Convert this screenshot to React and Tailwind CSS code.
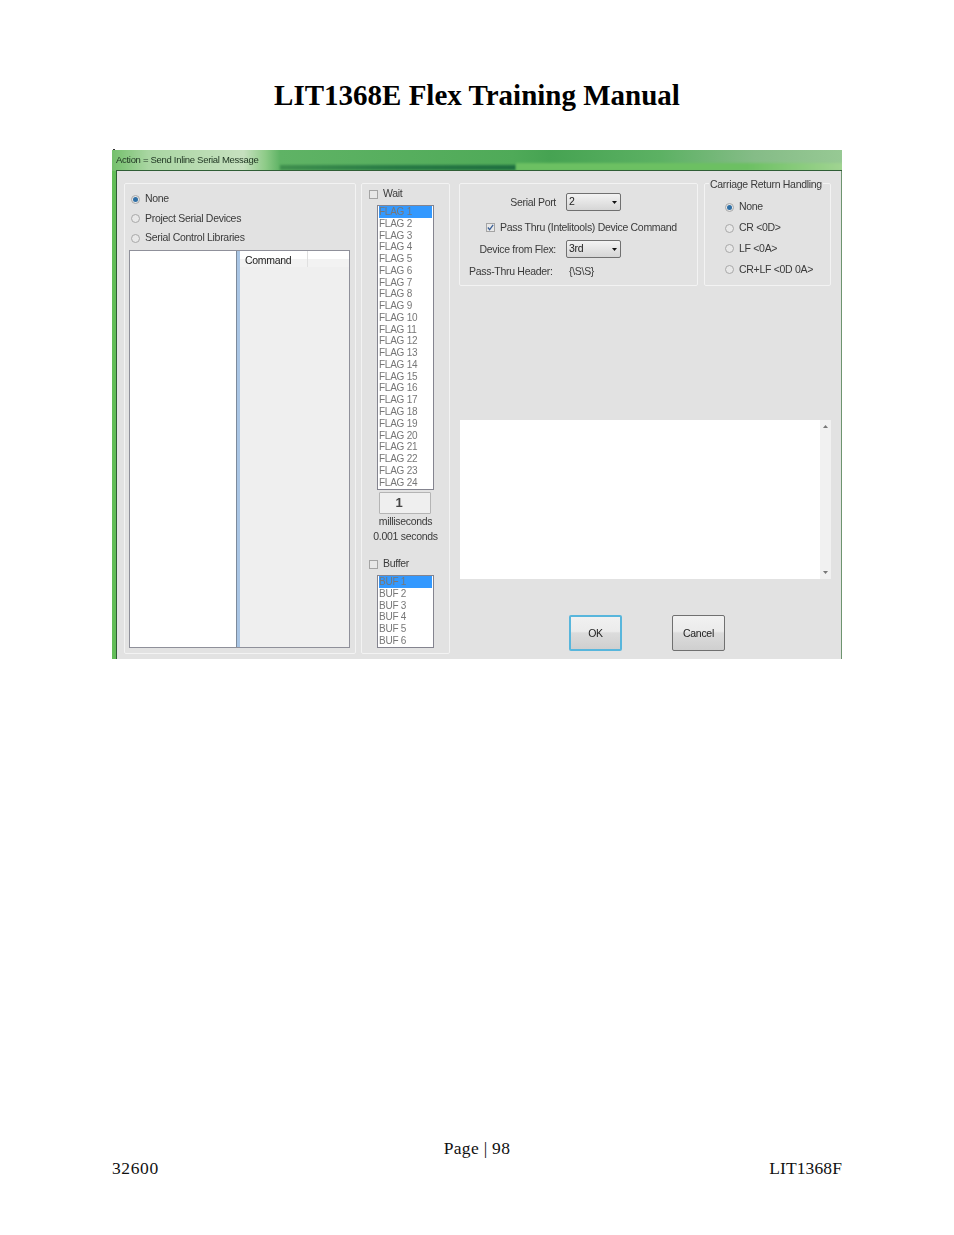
import React from 'react';

const flags = Array.from({ length: 24 }, (_, i) => `FLAG ${i + 1}`);
const bufs = Array.from({ length: 6 }, (_, i) => `BUF ${i + 1}`);

const Radio = ({ label, checked }) => (
    <div className="flex items-center gap-[5px] h-full">
        <span className="flex items-center justify-center w-[9px] h-[9px] rounded-full border border-[#a8a8a8] bg-[#e8e8e8]">
            {checked && <span className="w-[5px] h-[5px] rounded-full bg-[#2f6fa5]" />}
        </span>
        <span>{label}</span>
    </div>
);

const Checkbox = ({ checked }) => (
    <span className="flex items-center justify-center w-[9px] h-[9px] border border-[#a4a4a4] bg-[#e8e8e8]">
        {checked && (
            <svg width="7" height="7" viewBox="0 0 8 8">
                <path d="M1 4 L3 6.5 L7 1" fill="none" stroke="#3a5f96" strokeWidth="1.4" />
            </svg>
        )}
    </span>
);

const Combo = ({ value }) => (
    <div className="flex items-center justify-between w-[55px] h-[18px] pl-[2px] pr-[3px] border border-[#707070] rounded-[2px] bg-gradient-to-b from-[#f3f3f3] to-[#d6d6d6] text-[#222]">
        <span>{value}</span>
        <svg width="5" height="3" viewBox="0 0 5 3">
            <path d="M0 0 H5 L2.5 3 Z" fill="#111" />
        </svg>
    </div>
);

const ListBox = ({ items, className }) => (
    <div className={`ml-[15px] w-[57px] border border-[#84848f] bg-white px-px text-[10px] tracking-[-0.25px] text-[#777] ${className}`}>
        {items.map((item, i) => (
            <div key={item} className={`h-[11.78px] leading-[11.78px] ${i === 0 ? 'bg-[#3399ff]' : ''}`}>
                {item}
            </div>
        ))}
    </div>
);

const DialogButton = ({ children, className }) => (
    <button
        type="button"
        className={`w-[53px] h-[36px] pt-px rounded-[2px] text-[#222] bg-[linear-gradient(to_bottom,#f1f1f1_0%,#ebebeb_45%,#dcdcdc_50%,#cfcfcf_100%)] ${className}`}
    >
        {children}
    </button>
);

export default function App() {
    return (
        <div className="h-[1235px] bg-white font-['Liberation_Serif',serif] text-[#111] overflow-hidden">
            <h1 className="h-[40px] mt-[75px] text-center text-[29px] leading-[40px] font-bold text-black">
                LIT1368E Flex Training Manual
            </h1>

            <div className="relative mt-[35px] ml-[112px] w-[730px] h-[509px] flex flex-col font-['Liberation_Sans',sans-serif] text-[10.5px] tracking-[-0.3px] text-[#3a3a3a] blur-[0.3px]">
                <div className="absolute left-px -top-px w-[2px] h-px bg-[#333]" />

                {/* title bar */}
                <div className="relative h-[21px] shrink-0 overflow-hidden flex items-center pl-[4px] text-[9.5px] text-[#1d3320] bg-[linear-gradient(to_right,#74c06c_0%,#a9d6a2_5%,#c6e0bf_18%,#8ecb88_21%,#5fb365_23%,#4faa58_55%,#46a352_60%,#5cb163_75%,#85bc87_88%,#97c994_100%)]">
                    <div className="absolute left-[168px] w-[236px] bottom-px h-[5px] bg-[linear-gradient(to_right,#3f8f4e,#277a45_50%,#1f6f40)] blur-[1px]" />
                    <div className="absolute left-[404px] -right-[4px] bottom-0 h-[8px] bg-[linear-gradient(to_right,#6cc062_0%,#6cc062_70%,#a3d594_100%)] blur-[1px]" />
                    <div className="absolute left-[4px] right-0 bottom-0 h-px bg-[#2f5d35]" />
                    <span className="relative">Action = Send Inline Serial Message</span>
                </div>

                {/* dialog body */}
                <div className="flex-1 flex pl-[8px] pt-[12px] bg-[#e2e2e2] border-l-4 border-r border-l-[#62bd58] border-r-[#6d946f] shadow-[inset_1px_0_0_#2f5d35] min-h-0">
                    {/* device panel */}
                    <div className="w-[232px] h-[471px] shrink-0 flex flex-col pl-[4px] pr-[5px] pt-[5.5px] pb-[5px] border border-[#f3f3f3] rounded-[2px]">
                        <div className="pl-[2px] h-[19.5px]"><Radio label="None" checked /></div>
                        <div className="pl-[2px] h-[19.5px]"><Radio label="Project Serial Devices" /></div>
                        <div className="pl-[2px] h-[19.5px]"><Radio label="Serial Control Libraries" /></div>
                        <div className="flex h-[398px] mt-[2px] border border-[#8f909a]">
                            <div className="w-[106px] bg-white" />
                            <div className="w-[4px] bg-[#a9c5e4] border-l border-l-[#7d8b9c]" />
                            <div className="flex-1 bg-[#efefef]">
                                <div className="flex h-[16px] bg-[linear-gradient(to_bottom,#ffffff_50%,#f2f2f2_50%)] text-[#222]">
                                    <div className="w-[68px] pl-[5px] leading-[18px] border-r border-r-[#e0e0e0]">Command</div>
                                </div>
                            </div>
                        </div>
                    </div>

                    {/* wait and buffer panel */}
                    <div className="w-[89px] h-[471px] shrink-0 ml-[5px] flex flex-col border border-[#f3f3f3] rounded-[2px]">
                        <div className="flex items-center gap-[5px] h-[20px] pl-[7px]">
                            <Checkbox />
                            <span>Wait</span>
                        </div>
                        <ListBox items={flags} className="h-[285px] mt-px" />
                        <div className="ml-[17px] mt-[2px] w-[52px] h-[22px] flex items-center justify-center pr-[12px] bg-[#efefef] border border-[#b4b4b4] rounded-[1px] text-[13px] font-bold text-[#444]">
                            1
                        </div>
                        <div className="h-[15px] leading-[14px] text-center">milliseconds</div>
                        <div className="h-[15px] leading-[14px] text-center">0.001 seconds</div>
                        <div className="flex items-center gap-[5px] h-[20px] pl-[7px] mt-[10px]">
                            <Checkbox />
                            <span>Buffer</span>
                        </div>
                        <ListBox items={bufs} className="h-[73px] mt-px" />
                    </div>

                    {/* right side */}
                    <div className="w-[372px] shrink-0 ml-[9px] flex flex-col">
                        <div className="flex gap-[6px] h-[103px]">
                            <div className="w-[239px] pt-[9px] border border-[#f3f3f3] rounded-[2px]">
                                <div className="flex items-center gap-[10px]">
                                    <span className="w-[96px] pt-px text-right">Serial Port</span>
                                    <Combo value="2" />
                                </div>
                                <div className="flex items-center gap-[5px] h-[20px] mt-[6px] pl-[26px]">
                                    <Checkbox checked />
                                    <span className="pt-px">Pass Thru (Intelitools) Device Command</span>
                                </div>
                                <div className="flex items-center gap-[10px] mt-[3px]">
                                    <span className="w-[96px] pt-px text-right">Device from Flex:</span>
                                    <Combo value="3rd" />
                                </div>
                                <div className="flex items-center h-[16px] mt-[6px] pl-[9px]">
                                    <span className="w-[100px]">Pass-Thru Header:</span>
                                    <span>{'{\\S\\S}'}</span>
                                </div>
                            </div>
                            <div className="relative w-[127px] pt-[13px] pl-[20px] border border-[#f3f3f3] rounded-[2px]">
                                <span className="absolute left-[4px] -top-[6px] px-[1px] leading-[12px] bg-[#e2e2e2] whitespace-nowrap">
                                    Carriage Return Handling
                                </span>
                                <div className="h-[20.7px]"><Radio label="None" checked /></div>
                                <div className="h-[20.7px]"><Radio label="CR <0D>" /></div>
                                <div className="h-[20.7px]"><Radio label="LF <0A>" /></div>
                                <div className="h-[20.7px]"><Radio label="CR+LF <0D 0A>" /></div>
                            </div>
                        </div>

                        <div className="flex h-[159px] mt-[134px] ml-px">
                            <div className="w-[360px] bg-white" />
                            <div className="w-[11px] flex flex-col items-center justify-between py-[5px] bg-[#f1f1f1]">
                                <svg width="5" height="3" viewBox="0 0 5 3"><path d="M0 3 L2.5 0 L5 3 Z" fill="#777" /></svg>
                                <svg width="5" height="3" viewBox="0 0 5 3"><path d="M0 0 H5 L2.5 3 Z" fill="#777" /></svg>
                            </div>
                        </div>

                        <div className="flex gap-[50px] mt-[36px] ml-[110px]">
                            <DialogButton className="border-2 border-[#58b6dc]">OK</DialogButton>
                            <DialogButton className="border border-[#707070]">Cancel</DialogButton>
                        </div>
                    </div>
                </div>
            </div>

            <div className="mt-[479px] h-[20px] text-center text-[17.5px] leading-[20px] tracking-[0.3px]">Page | 98</div>
            <div className="flex justify-between h-[20px] px-[112px] text-[17.5px] leading-[20px]">
                <span className="tracking-[0.6px]">32600</span>
                <span className="tracking-[0.1px]">LIT1368F</span>
            </div>
        </div>
    );
}
